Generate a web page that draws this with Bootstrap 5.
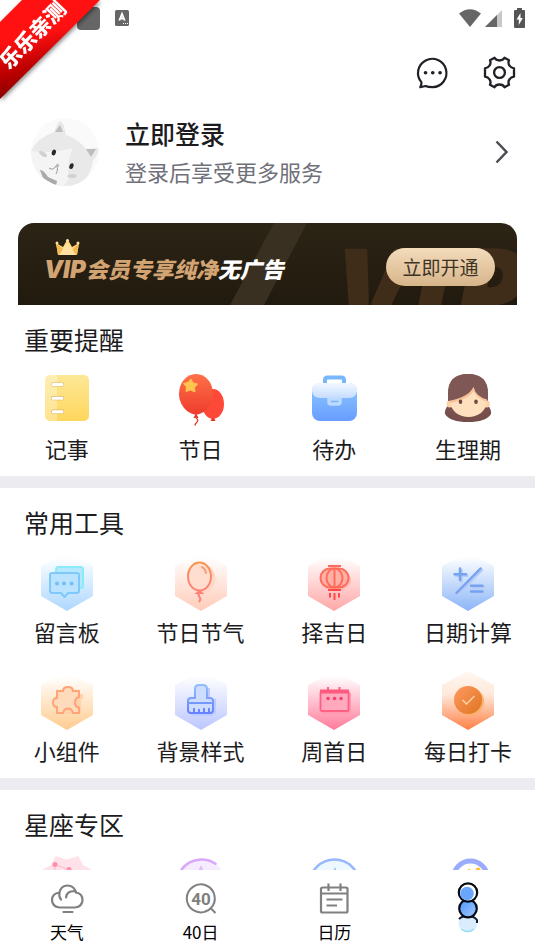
<!DOCTYPE html>
<html lang="zh-CN">
<head>
<meta charset="utf-8">
<meta name="viewport" content="width=device-width, initial-scale=1">
<title>我的</title>
<link href="https://cdn.jsdelivr.net/npm/bootstrap@5.3.0/dist/css/bootstrap.min.css" rel="stylesheet">
<style>
body{font-family:"Noto Sans CJK SC","Noto Sans",sans-serif;color:#1c1c1e;background:#fff}
svg{display:block;overflow:visible;flex-shrink:0}
a{color:inherit;text-decoration:none}
.status-bar{height:36px;padding:0 10px 0 77px;gap:4px}
.ribbon{width:110px;height:110px;filter:drop-shadow(1px 2px 2px #0007)}
.ribbon-face{width:100px;height:99px;clip-path:polygon(22px 0,100% 0,0 100%,0 22px);background:linear-gradient(165deg,#f11 35%,#b00 60%,#600 95%)}
.ribbon-text{left:-18px;top:19px;width:100px;transform:rotate(-46deg);font-size:21px;line-height:30px;font-weight:900;color:#fff;text-align:center}
.actions{padding:20px 19px 0;gap:34px}
.profile{padding:25px 26px 0 31px;gap:26px}
.profile-name{font-size:25px;line-height:38px;font-weight:500}
.profile-note{font-size:22px;line-height:38px;color:#70707a}
.vip-banner{margin:33px 18px 0;min-height:82px;padding:0 22px 19px 26px;border-radius:16px 16px 0 0;background:linear-gradient(#2c2415,#211a0e)}
.vip-text{font-size:22px;line-height:24px;font-weight:900;font-style:italic;color:#d3a473}
.vip-latin{font-family:Inter,sans-serif;font-size:24px}
.vip-btn{height:38px;width:109px;border-radius:19px;font-size:19px;line-height:36px;color:#3d3325;background:linear-gradient(#f3dbbb,#d7b58a)}
.panel{padding:16px 0 12px}
.panel + .panel{border-top:12px solid #ecebf0}
.panel h2{font-size:25px;line-height:36px;font-weight:400;margin:0 24px 14px}
.tool-grid{row-gap:26px}
.tool-label{font-size:22px;line-height:32px;margin-top:1px}
.tab-bar{padding:10px 0 8px;background:#fff}
.tab-label{font-size:17px;line-height:24px;margin-top:4px;color:#000}
</style>
<script src="https://cdn.jsdelivr.net/npm/bootstrap@5.3.0/dist/js/bootstrap.bundle.min.js"></script>
</head>
<body class="vh-100 d-flex flex-column overflow-hidden">
<div class="ribbon position-absolute top-0 start-0 z-1"><div class="ribbon-face position-relative overflow-hidden"><div class="ribbon-text position-absolute text-nowrap">乐乐亲测</div></div></div>

<main class="flex-grow-1 overflow-hidden">
  <div class="status-bar d-flex align-items-center">
    <svg width="23" height="23" viewBox="0 0 23 23"><rect width="23" height="23" rx="4" fill="#666"/></svg>
    <svg class="ms-2 me-auto" width="20" height="16" viewBox="0 0 20 16"><rect x="3" width="14" height="16" rx="1.5" fill="#666"/><path d="M7.300 10.500 10 4 12.700 10.500M8.500 8.500h3" stroke="#fff" stroke-width="1.900" fill="none"/><path d="M11 13.500h5" stroke="#fff" stroke-dasharray="1 1"/></svg>
    <svg width="22" height="18" viewBox="0 0 22 18"><path d="M0 4.5Q11-4 22 4.5L11 18Z" fill="#666"/></svg>
    <svg width="17" height="17" viewBox="0 0 17 17"><path d="M17 0V17H0Z" fill="#c8c8c8"/><path d="M12 5V17H0Z" fill="#666"/></svg>
    <svg class="ms-2" width="11" height="20" viewBox="0 0 11 20"><path d="M3 0h5v2h2q1 0 1 1v16q0 1-1 1H1q-1 0-1-1V3q0-1 1-1h2z" fill="#555"/><path d="M6.5 5 2.5 11.5h2.3V17l4-7H6.5z" fill="#fff"/></svg>
  </div>

  <div class="actions d-flex justify-content-end">
    <button class="btn p-0 border-0" type="button" aria-label="消息"><svg width="33" height="33" viewBox="0 0 33 33" fill="none" stroke="#202126" stroke-width="2.2"><path d="M5.4 26.2A14.2 14.2 0 1 1 16.7 31.2Q12 31.200 9.500 30L4.300 31.200Q5.8 29 5.4 26.2Z" stroke-linejoin="round"/><path d="M9.5 16.7h.1M16.7 16.7h.1M24 16.7h.1" stroke-width="3.6" stroke-linecap="round"/></svg></button>
    <button class="btn p-0 border-0" type="button" aria-label="设置"><svg width="33" height="33" viewBox="0 0 33 33" fill="none" stroke="#202126" stroke-width="2.3" stroke-linejoin="round"><circle cx="16.5" cy="16.5" r="5.4"/><path d="M11.500 1.800Q13 4.500 16.500 4.500T21.500 1.800L26 4.200Q24.800 7.500 26.400 9.500 28 12 31 12.300V20.700Q28 21 26.400 23.500 24.800 25.500 26 28.800L21.500 31.200Q20 28.500 16.500 28.500T11.500 31.200L7 28.800Q8.200 25.500 6.600 23.500 5 21 2 20.700V12.300Q5 12 6.600 9.500 8.200 7.500 7 4.200Z"/></svg></button>
  </div>

  <a href="#" class="profile d-flex align-items-center">
    <svg width="68" height="68" viewBox="0 0 68 68"><clipPath id="face"><circle cx="34" cy="34" r="34"/></clipPath><circle cx="34" cy="34" r="34" fill="#fafafa"/><g clip-path="url(#face)"><path d="M0 33Q6 20 23 14L27 5Q30 1 33 8L35 17Q46 20 55 31L67 30Q69 33 62 43 60 57 49 66L30 70 9 59Q0 47 0 33Z" fill="#e9e9e9"/><path d="M0 33Q18 36 42 30 35 45 38 60 36 66 30 69L10 59Q0 47 0 33Z" fill="#f4f4f4"/><path d="M24 14 29 7 32 14ZM55 31 65 31 60 39Z" fill="#bdbdbd"/><path d="M9 52Q12 51 17 59L26 63 25 68 12 60Z" fill="#aaa"/><ellipse cx="12" cy="36" rx="4.5" ry="2" transform="rotate(35 12 36)" fill="#d1d1d1"/><ellipse cx="41" cy="58" rx="4.5" ry="2" fill="#d1d1d1"/><ellipse cx="23" cy="34.500" rx="2" ry="3" transform="rotate(20 23 34)" fill="#292929"/><ellipse cx="40.500" cy="48" rx="2" ry="3" transform="rotate(20 40 48)" fill="#292929"/><path d="M18 50Q22 53 25 48 28 50 25 56" fill="none" stroke="#999"/><circle cx="26.500" cy="47.500" r="1.700" fill="#bbb"/></g></svg>
    <div class="flex-grow-1"><div class="profile-name">立即登录</div><div class="profile-note">登录后享受更多服务</div></div>
    <svg width="14" height="24" viewBox="0 0 14 24" fill="none" stroke="#4b4b52" stroke-width="2.5"><path d="M1.500 1.500 11.500 12 1.500 22.500"/></svg>
  </a>

  <section class="vip-banner position-relative overflow-hidden d-flex align-items-end justify-content-between" aria-label="VIP会员">
    <svg class="position-absolute top-0 start-0 w-100 h-100" viewBox="0 0 499 82" preserveAspectRatio="xMaxYMid slice" aria-hidden="true"><path d="M256 0H289L246 82H212Z" fill="#393021"/><text x="318" y="112" font-family="Open Sans" font-size="120" font-weight="800" font-style="italic" fill="#3f2d1a">VIP</text></svg>
    <div class="position-relative pb-1">
      <svg class="ms-2" width="32" height="17" viewBox="-4 0 32 17"><path d="M2 16 0 4 7 8 11.500 0 16 8 23 4 21 16Z" fill="#ffd37b"/><path d="M2 16 0 4 8 11 11.500 2V16ZM16 16 17 10 23 4 21 16Z" fill="#f3b94e"/><path d="M3 16 11.500 3 20 16Z" fill="#ffe0a0"/><g fill="#ffe0a0"><circle cx="1" cy="4" r="1.500"/><circle cx="11.500" cy="1.500" r="1.500"/><circle cx="22" cy="4" r="1.500"/></g></svg>
      <div class="vip-text text-nowrap"><span class="vip-latin">VIP</span>会员专享纯净<span class="text-white">无广告</span></div>
    </div>
    <button class="vip-btn btn p-0 border-0 position-relative" type="button">立即开通</button>
  </section>

  <section class="panel">
    <h2>重要提醒</h2>
    <div class="tool-grid row g-0 row-cols-4 text-center">
      <a href="#" class="col d-flex flex-column align-items-center">
        <svg width="60" height="60" viewBox="0 0 60 60"><linearGradient id="note" x2="0" y2="1"><stop stop-color="#fce896"/><stop offset="1" stop-color="#ffd65c"/></linearGradient><rect x="8" y="4" width="44" height="46" rx="5" fill="url(#note)"/><path d="M13 4h7v46h-7q-5 0-5-5V9q0-5 5-5Z" fill="#fff" opacity=".3"/><path d="M16 13.500h9M16 27.200h9M16 40.700h9" stroke="#dfb570" stroke-width="4.200" stroke-linecap="round"/><path d="M16 13.500h9M16 27.200h9M16 40.700h9" stroke="#fff" stroke-width="3" stroke-linecap="round"/></svg>
        <span class="tool-label">记事</span></a>
      <a href="#" class="col d-flex flex-column align-items-center">
        <svg width="60" height="60" viewBox="0 0 60 60"><linearGradient id="bal" x2="0" y2="1"><stop stop-color="#ff7148"/><stop offset="1" stop-color="#ed3c2d"/></linearGradient><ellipse cx="42" cy="33" rx="11" ry="15" fill="#ff4938"/><path d="m41 47-1.500 3h5l-1.500-3z" fill="#ee342a"/><path d="M25 3C35 3 42 12 42 23S33 43.500 25 43.500 8 34 8 23 15 3 25 3Z" fill="url(#bal)"/><path d="m25 42-2.500 5h5z" fill="#e53a2c"/><path d="M25 47q3 2 1 4t-2 3.500" fill="none" stroke="#e53a2c" stroke-width="1.300"/><path d="m20 8 2 4 4.500 1-3 3.500.5 4.500-4.500-2-4.500 1.500.5-4.500-3-3.500 4.500-1z" fill="#ffc54f" stroke="#ffc54f" stroke-linejoin="round"/></svg>
        <span class="tool-label">节日</span></a>
      <a href="#" class="col d-flex flex-column align-items-center">
        <svg width="60" height="60" viewBox="0 0 60 60"><linearGradient id="bag" x2="0" y2="1"><stop stop-color="#8dcaff"/><stop offset="1" stop-color="#699cff"/></linearGradient><linearGradient id="flap" x2="0" y2="1"><stop stop-color="#f3f8ff"/><stop offset="1" stop-color="#c6ddff"/></linearGradient><path d="M21 13V9q0-2.500 2.500-2.500h14Q40 6.500 40 9v4" fill="none" stroke="#78b7fc" stroke-width="4"/><rect x="8" y="12" width="45" height="38" rx="8" fill="url(#bag)"/><path d="M15 12h31q7 0 7 8-1 7-8 7H16q-7 0-8-7 0-8 7-8Z" fill="url(#flap)"/><path d="M25 27v4q0 2 2 2h7q2 0 2-2v-4M25 28h11" fill="none" stroke="#bddaff" stroke-width="3.500"/></svg>
        <span class="tool-label">待办</span></a>
      <a href="#" class="col d-flex flex-column align-items-center">
        <svg width="60" height="60" viewBox="0 0 60 60"><linearGradient id="hair" x2="0" y2="1"><stop stop-color="#855d5a"/><stop offset="1" stop-color="#744d4b"/></linearGradient><path d="M10 25Q10 3 30 3T50 25V34Q54 40 53 43 48 51 30 51T7 43Q6 40 10 34Z" fill="url(#hair)"/><circle cx="12" cy="33" r="3.500" fill="#ffd3a9"/><circle cx="48.500" cy="33" r="3.500" fill="#ffd3a9"/><path d="M12 28 35 14 49 28Q49 37 43 42 37 46 30.500 46T18 42Q12 37 12 28Z" fill="#ffe0be"/><path d="M12 29Q30 25 35.500 17 39 26 49 29V31Q39 28 35.500 20 31 28 12 32Z" fill="#f5c296"/><path d="M10 30V22Q10 3 30 3T50 22V29Q38 26 35.500 16 31 26 10 30Z" fill="#7f5855"/><ellipse cx="22.500" cy="30.700" rx="1.800" ry="2.300" fill="#6e4745"/><ellipse cx="38" cy="30.700" rx="1.800" ry="2.300" fill="#6e4745"/></svg>
        <span class="tool-label">生理期</span></a>
    </div>
  </section>

  <section class="panel">
    <h2>常用工具</h2>
    <div class="tool-grid row g-0 row-cols-4 text-center">
      <a href="#" class="col d-flex flex-column align-items-center">
        <svg width="60" height="60" viewBox="0 0 60 60"><linearGradient id="h1" x2="0" y2="1"><stop offset=".08" stop-color="#fff"/><stop offset="1" stop-color="#acd7ff"/></linearGradient><path d="M30-2 56 12V42L30 57 4 42V12Z" fill="url(#h1)"/><g fill="#b5e8ff" stroke="#8aeafa" stroke-width="2" stroke-linejoin="round"><rect x="19" y="13" width="27" height="21" rx="2.500"/><path d="M15 19H40q2 0 2 2V37q0 2-2 2H31l-3.500 4-3.500-4H15q-2 0-2-2V21q0-2 2-2Z" stroke="#80c8fa" fill="#b9e3ff"/></g><path d="M20 29.500h.1M27 29.500h.1M34.500 29.500h.1" stroke="#77bdf8" stroke-width="4" stroke-linecap="round"/></svg>
        <span class="tool-label">留言板</span></a>
      <a href="#" class="col d-flex flex-column align-items-center">
        <svg width="60" height="60" viewBox="0 0 60 60"><linearGradient id="h2" x2="0" y2="1"><stop offset=".08" stop-color="#fff"/><stop offset="1" stop-color="#ffcbb8"/></linearGradient><linearGradient id="b2" x2="0" y2="1"><stop stop-color="#f9944e"/><stop offset="1" stop-color="#ff8277"/></linearGradient><path d="M30-2 56 12V42L30 57 4 42V12Z" fill="url(#h2)"/><ellipse cx="33" cy="25" rx="11.500" ry="14" fill="#ffd8c8"/><ellipse cx="28.500" cy="22.500" rx="11.500" ry="14" fill="#ffded0" stroke="url(#b2)" stroke-width="2"/><path d="M31 13q3.500 2 4 6" fill="none" stroke="#fa9a71" stroke-width="2" stroke-linecap="round"/><path d="m26 39 2.500-2 2.500 2z" fill="#ff8378" stroke="#ff8378" stroke-width="1.800"/><path d="M28.500 39q-2 2 0 4t-.5 5" fill="none" stroke="#ff8378" stroke-width="2"/></svg>
        <span class="tool-label">节日节气</span></a>
      <a href="#" class="col d-flex flex-column align-items-center">
        <svg width="60" height="60" viewBox="0 0 60 60"><linearGradient id="h3" x2="0" y2="1"><stop offset=".08" stop-color="#fff"/><stop offset="1" stop-color="#ffa6a6"/></linearGradient><path d="M30-2 56 12V42L30 57 4 42V12Z" fill="url(#h3)"/><ellipse cx="33" cy="26" rx="14" ry="10" fill="#ffb4ad"/><g fill="#ffb1a5" stroke="#ff6c5b" stroke-width="2"><rect x="16.500" y="14.500" width="28" height="19" rx="9.500"/><ellipse cx="30.500" cy="24" rx="8" ry="9.500"/><path d="M30.500 15v18M24 12h13"/><path d="M24 36h13M26 39v4.500M30.500 39v7M35 39v4.500" stroke="#ff4848"/></g></svg>
        <span class="tool-label">择吉日</span></a>
      <a href="#" class="col d-flex flex-column align-items-center">
        <svg width="60" height="60" viewBox="0 0 60 60"><linearGradient id="h4" x2="0" y2="1"><stop offset=".08" stop-color="#fff"/><stop offset="1" stop-color="#8bb5f8"/></linearGradient><path d="M30-2 56 12V42L30 57 4 42V12Z" fill="url(#h4)"/><g fill="none" stroke-width="2.500" stroke-linecap="round"><path d="M23.500 16v11.500M18 21.800H29.500M20 40.500 44 16M34.500 33.200h11.500M34.500 39h11.500" stroke="#b3cbf6"/><path d="M22 14.500v11.500M16.500 20.300H28M18.500 39 42.500 14.500M33 31.700h11.500M33 37.500h11.500" stroke="#76a2f2"/></g></svg>
        <span class="tool-label">日期计算</span></a>
      <a href="#" class="col d-flex flex-column align-items-center">
        <svg width="60" height="60" viewBox="0 0 60 60"><linearGradient id="h5" x2="0" y2="1"><stop offset=".08" stop-color="#fff"/><stop offset="1" stop-color="#ffcb8e"/></linearGradient><path d="M30-2 56 12V42L30 57 4 42V12Z" fill="url(#h5)"/><path d="M24 21H46V26H44V41H25Z" fill="#ffd2a9"/><path d="M20 18H26Q26 14 31 14T36 18H42V24Q38 25 38 29.500T42 34.500V40H36Q35 35.500 31 35.500T26 40H20V34Q16 34 16 29.500T20 25Z" fill="#ffdabb" stroke="#ffa477" stroke-width="2"/></svg>
        <span class="tool-label">小组件</span></a>
      <a href="#" class="col d-flex flex-column align-items-center">
        <svg width="60" height="60" viewBox="0 0 60 60"><linearGradient id="h6" x2="0" y2="1"><stop offset=".08" stop-color="#fff"/><stop offset="1" stop-color="#bbc6ff"/></linearGradient><linearGradient id="br" x2="0" y2="1"><stop stop-color="#90bfff"/><stop offset="1" stop-color="#6681ff"/></linearGradient><path d="M30-2 56 12V42L30 57 4 42V12Z" fill="url(#h6)"/><path d="M27 15h12v11h6v14l-4 3H20z" fill="#bdcbff"/><path d="M24 25V16q0-4 4-4h4q4 0 4 4V25H39q3 0 3 3V37q0 3-3 3H20q-3 0-3-3V28q0-3 3-3ZM17 30H42M23 39v-4M28 39v-3M33 39v-4M38 39v-4" fill="#cedcff" stroke="url(#br)" stroke-width="2"/></svg>
        <span class="tool-label">背景样式</span></a>
      <a href="#" class="col d-flex flex-column align-items-center">
        <svg width="60" height="60" viewBox="0 0 60 60"><linearGradient id="h7" x2="0" y2="1"><stop offset=".08" stop-color="#fff"/><stop offset="1" stop-color="#ff7b9b"/></linearGradient><path d="M30-2 56 12V42L30 57 4 42V12Z" fill="url(#h7)"/><rect x="18" y="19" width="29" height="22" rx="2" fill="#ff98af"/><rect x="16.500" y="18" width="28" height="20" rx="1.500" fill="#ffa8be" stroke="#ff5f83" stroke-width="1.800"/><path d="M16 18.500H45" stroke="#ff5a7f" stroke-width="4"/><path d="M24 14v3M35.500 14v3" stroke="#ff5a7f" stroke-width="2"/><path d="M24 25.500h.1M30.500 25.500h.1M37 25.500h.1" stroke="#f3416b" stroke-width="3.500" stroke-linecap="round"/></svg>
        <span class="tool-label">周首日</span></a>
      <a href="#" class="col d-flex flex-column align-items-center">
        <svg width="60" height="60" viewBox="0 0 60 60"><linearGradient id="h8" x2="0" y2="1"><stop stop-color="#fff8f2"/><stop offset=".4" stop-color="#ffe8da"/><stop offset="1" stop-color="#ff8044"/></linearGradient><linearGradient id="ck" y2="1"><stop stop-color="#ff9a62"/><stop offset="1" stop-color="#df7420"/></linearGradient><path d="M30-2 56 12V42L30 57 4 42V12Z" fill="url(#h8)"/><circle cx="32" cy="28.500" r="14" fill="#fbb06d"/><circle cx="30" cy="27" r="14" fill="url(#ck)"/><path d="m24.500 27 4 4 8-8" stroke="#ffd3ac" stroke-width="1.500" fill="none"/></svg>
        <span class="tool-label">每日打卡</span></a>
    </div>
  </section>

  <section class="panel">
    <h2>星座专区</h2>
    <div class="tool-grid row g-0 row-cols-4 text-center">
      <a href="#" class="col d-flex flex-column align-items-center" aria-label="星座">
        <svg width="60" height="60" viewBox="0 0 60 60"><path d="M18.500 0 29.500 3.500 41.500 0 46 9 57 15 51 30 57 44 41 59H19L3 44 9 30 3 15 14 9Z" fill="#ffe2e9"/><path d="M18 8.600 32 13.500M18 8.600V24" stroke="#ffb5c6"/><circle cx="18" cy="8.600" r="2.500" fill="#ff8fa9"/><circle cx="32" cy="13.500" r="2.500" fill="#ff8fa9"/></svg></a>
      <a href="#" class="col d-flex flex-column align-items-center" aria-label="塔罗">
        <svg width="60" height="60" viewBox="0 0 60 60"><circle cx="31" cy="28" r="24" fill="#f5edff"/><path d="M6 28A24.500 24.500 0 0 1 44.500 7.800" fill="none" stroke="#d9a8fb" stroke-width="2.500" stroke-linecap="round"/><path d="m30 9 6 13H24z" fill="#dfbdfa"/></svg></a>
      <a href="#" class="col d-flex flex-column align-items-center" aria-label="运势">
        <svg width="60" height="60" viewBox="0 0 60 60"><circle cx="30.500" cy="28.500" r="25" fill="#edf8ff" stroke="#97b8fc" stroke-width="2.500"/><path d="m31 11 5 17-5 17-5-17z" fill="#83aafb"/></svg></a>
      <a href="#" class="col d-flex flex-column align-items-center" aria-label="配对">
        <svg width="60" height="60" viewBox="0 0 60 60"><circle cx="32.500" cy="22" r="17" fill="#fff" stroke="#9cacfc" stroke-width="5"/><circle cx="40" cy="14" r="2.500" fill="#ffc332"/><path d="M30 14h2" stroke="#ffc332" stroke-width="2"/></svg></a>
    </div>
  </section>
</main>

<nav class="tab-bar row g-0 row-cols-4 text-center flex-shrink-0" aria-label="主导航">
  <a href="#" class="col d-flex flex-column align-items-center"><svg width="36" height="36" viewBox="0 0 36 36" fill="none" stroke="#808080" stroke-width="2.200" stroke-linecap="round"><path d="M10.500 27.500Q3 26.500 3 20T10.500 12.500Q12 5.500 18.500 5.500T27 12.500Q33.500 13.500 33.500 20T26 27.500ZM10.500 12.500Q9.500 16 12 19.500M27 11.500Q18 10 17 17.500M14.500 32H23.500"/></svg><span class="tab-label">天气</span></a>
  <a href="#" class="col d-flex flex-column align-items-center"><svg width="36" height="36" viewBox="0 0 36 36" fill="none" stroke="#808080" stroke-width="2"><path d="M27.500 28.500A14 14 0 1 0 23.500 31.200M27 27.500 32.500 33"/><path d="M22.500 31.500Q25.500 30.500 28 28"/><text x="18" y="25" text-anchor="middle" font-family="Roboto" font-size="17" font-weight="700" fill="#808080" stroke="none">40</text></svg><span class="tab-label">40日</span></a>
  <a href="#" class="col d-flex flex-column align-items-center"><svg width="36" height="36" viewBox="0 0 36 36" fill="none" stroke="#808080" stroke-width="2.200"><rect x="5" y="7.500" width="26.500" height="25" rx="1.500"/><path d="M5 13.500H31.500M12.500 3.500V11M24.500 3.500V11M10.500 19.500H26.500M10.500 25.500H21"/></svg><span class="tab-label">日历</span></a>
  <a href="#" class="col d-flex flex-column align-items-center" aria-label="我的" aria-current="page"><svg width="36" height="56" viewBox="0 0 36 56"><linearGradient id="orb" x2="1" y2="1"><stop stop-color="#4c94ff"/><stop offset="1" stop-color="#a2cbff"/></linearGradient><circle cx="18" cy="43" r="9.500" fill="#d9edff"/><path d="M9 39Q12 36 18 36T27 40V43" fill="none" stroke="#122035" stroke-width="2"/><circle cx="18" cy="28.500" r="8.800" fill="url(#orb)" stroke="#060b13" stroke-width="2.200"/><circle cx="18" cy="12.500" r="9.200" fill="#fff" stroke="#060b13" stroke-width="2.200"/><circle cx="17" cy="13.500" r="6.800" fill="#68a6ff"/><path d="M11 49Q17 54 24 49" fill="none" stroke="#78d4ef"/></svg></a>
</nav>
</body>
</html>
